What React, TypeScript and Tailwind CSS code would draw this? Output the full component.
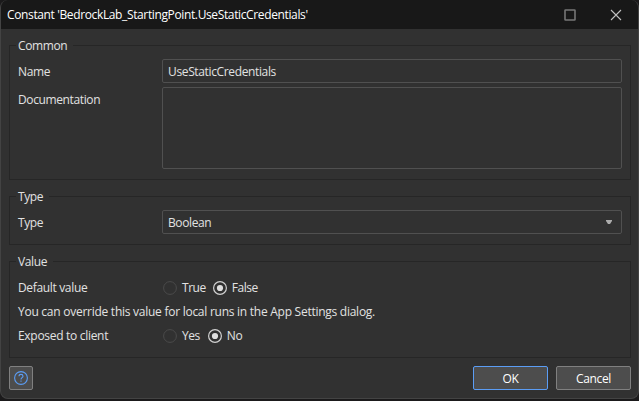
import type { ReactNode } from "react";

function Group({ title, className, children }: { title: string; className: string; children: ReactNode }) {
  return (
    <section className={`flex flex-col items-start border border-[#262626] pl-2 pr-2 ${className}`}>
      <h2 className="-mt-2 -ml-0.5 h-4 bg-[#313131] pl-0.5 pr-1.5 leading-4">{title}</h2>
      {children}
    </section>
  );
}

function Radio({ label, checked = false }: { label: string; checked?: boolean }) {
  return (
    <label className="flex items-center gap-[5px]">
      <svg width="14" height="14" viewBox="0 0 14 14" fill="none">
        <circle cx="7" cy="7" r="6.4" stroke={checked ? "#d0d0d0" : "#4b4b4b"} strokeWidth={checked ? 1.2 : 1} />
        {checked && <circle cx="7" cy="7" r="3.1" fill="#dedede" />}
      </svg>
      <span className="leading-4 tracking-[-0.45px]">{label}</span>
    </label>
  );
}

export default function App() {
  return (
    <div className="h-[401px] w-[639px] bg-[#1b1a1b] font-['Open_Sans','Noto_Sans',sans-serif] text-[12px] leading-4 tracking-[-0.38px] text-[#e2e2e2]">
      <div className="flex h-[399px] w-[639px] flex-col overflow-hidden rounded-lg border border-t-0 border-[#434343] bg-[#313131]">
        <header className="flex h-[29px] shrink-0 items-center justify-between bg-[#181818] pl-1.5 pr-4 text-white">
          <h1 className="tracking-[-0.37px]">Constant 'BedrockLab_StartingPoint.UseStaticCredentials'</h1>
          <div className="flex items-center gap-[34px]">
            <svg width="12" height="12" viewBox="0 0 12 12" fill="none">
              <rect x="1" y="1" width="10" height="10" rx="0.5" stroke="#777" strokeWidth="1.6" />
            </svg>
            <svg width="12" height="12" viewBox="0 0 12 12" fill="none">
              <path d="M1 1l10 10M11 1L1 11" stroke="#c0c0c0" strokeWidth="1.1" />
            </svg>
          </div>
        </header>
        <main className="flex flex-col pl-2 pr-[7px] pt-4">
          <Group title="Common" className="h-[135px]">
            <div className="mt-[5px] flex h-6 w-full items-center">
              <span className="w-36 pt-0.5">Name</span>
              <div className="flex h-6 grow items-center rounded-[2px] border border-[#505050] pl-[5px] pt-0.5 tracking-[-0.36px]">UseStaticCredentials</div>
            </div>
            <div className="mt-1 flex w-full">
              <span className="mt-[5px] w-36">Documentation</span>
              <div className="h-[82px] grow rounded-[2px] border border-[#505050]" />
            </div>
          </Group>
          <Group title="Type" className="mt-4 h-[49px]">
            <div className="mt-[5px] flex h-6 w-full items-center">
              <span className="w-36 pt-0.5">Type</span>
              <div className="flex h-6 grow items-center justify-between rounded-[2px] border border-[#505050] pl-[5px] pr-[9px]">
                <span className="pt-0.5">Boolean</span>
                <svg width="6" height="4" viewBox="0 0 6 4">
                  <path d="M0 0h6v1L4 4H2L0 1z" fill="#acacac" />
                </svg>
              </div>
            </div>
          </Group>
          <Group title="Value" className="mt-4 h-[97px]">
            <div className="mt-[10px] flex h-4 items-center">
              <span className="w-[145px] tracking-[-0.34px]">Default value</span>
              <div className="flex gap-[7px]">
                <Radio label="True" />
                <Radio label="False" checked />
              </div>
            </div>
            <p className="mt-2 tracking-[-0.26px]">You can override this value for local runs in the App Settings dialog.</p>
            <div className="mt-2 flex h-4 items-center">
              <span className="w-[145px] tracking-[-0.3px]">Exposed to client</span>
              <div className="flex gap-[8px]">
                <Radio label="Yes" />
                <Radio label="No" checked />
              </div>
            </div>
          </Group>
          <footer className="mt-2 flex h-6 items-center">
            <button className="mr-auto flex h-6 w-6 items-center justify-center rounded-[2px] border border-[#808080] bg-[#4d4d4d]">
              <svg width="14" height="14" viewBox="0 0 14 14" fill="none" stroke="#5b9df5" strokeWidth="1.1">
                <circle cx="7" cy="7" r="6.4" />
                <path d="M5 5.3C5 4.1 5.8 3.4 7 3.4s2 .7 2 1.8C9 6.6 7 6.7 7 8.4M7 9.6v1.2" />
              </svg>
            </button>
            <button className="h-6 w-[75px] rounded-[2px] border border-[#5b9df5] bg-[#4d4d4d] pt-px text-white">OK</button>
            <button className="ml-2 h-6 w-[75px] rounded-[2px] border border-[#808080] bg-[#4d4d4d] pt-px text-white">Cancel</button>
          </footer>
        </main>
      </div>
    </div>
  );
}
